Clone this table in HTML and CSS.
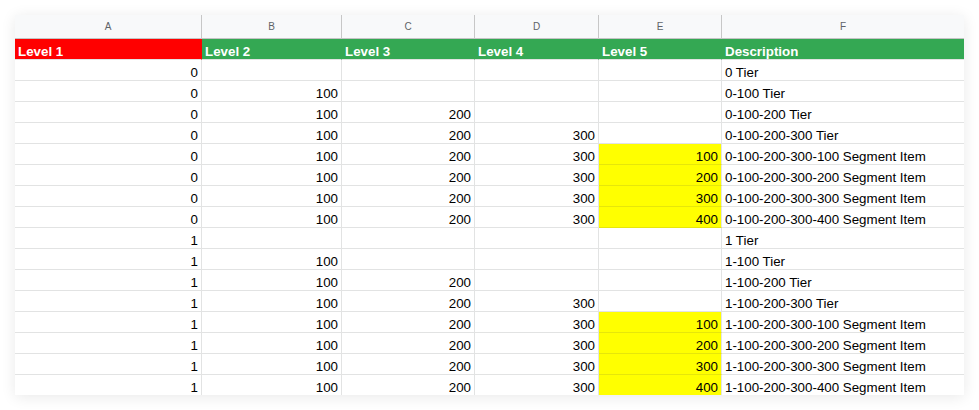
FILE: index.html
```html
<!DOCTYPE html>
<html lang="en">
<head>
<meta charset="utf-8">
<title>Levels sheet</title>
<link rel="stylesheet" href="styles.css">
</head>
<body>
<div class="sheet">
  <div class="row colhead">
    <div class="c">A</div><div class="c">B</div><div class="c">C</div><div class="c">D</div><div class="c">E</div><div class="c">F</div>
  </div>
  <div class="row head">
    <div class="c red">Level 1</div><div class="c green">Level 2</div><div class="c green">Level 3</div><div class="c green">Level 4</div><div class="c green">Level 5</div><div class="c green">Description</div>
  </div>
  <div class="row"><div class="c n">0</div><div class="c n"></div><div class="c n"></div><div class="c n"></div><div class="c n"></div><div class="c t">0 Tier</div></div>
  <div class="row"><div class="c n">0</div><div class="c n">100</div><div class="c n"></div><div class="c n"></div><div class="c n"></div><div class="c t">0-100 Tier</div></div>
  <div class="row"><div class="c n">0</div><div class="c n">100</div><div class="c n">200</div><div class="c n"></div><div class="c n"></div><div class="c t">0-100-200 Tier</div></div>
  <div class="row"><div class="c n">0</div><div class="c n">100</div><div class="c n">200</div><div class="c n">300</div><div class="c n"></div><div class="c t">0-100-200-300 Tier</div></div>
  <div class="row"><div class="c n">0</div><div class="c n">100</div><div class="c n">200</div><div class="c n">300</div><div class="c n hl">100</div><div class="c t">0-100-200-300-100 Segment Item</div></div>
  <div class="row"><div class="c n">0</div><div class="c n">100</div><div class="c n">200</div><div class="c n">300</div><div class="c n hl">200</div><div class="c t">0-100-200-300-200 Segment Item</div></div>
  <div class="row"><div class="c n">0</div><div class="c n">100</div><div class="c n">200</div><div class="c n">300</div><div class="c n hl">300</div><div class="c t">0-100-200-300-300 Segment Item</div></div>
  <div class="row"><div class="c n">0</div><div class="c n">100</div><div class="c n">200</div><div class="c n">300</div><div class="c n hl">400</div><div class="c t">0-100-200-300-400 Segment Item</div></div>
  <div class="row"><div class="c n">1</div><div class="c n"></div><div class="c n"></div><div class="c n"></div><div class="c n"></div><div class="c t">1 Tier</div></div>
  <div class="row"><div class="c n">1</div><div class="c n">100</div><div class="c n"></div><div class="c n"></div><div class="c n"></div><div class="c t">1-100 Tier</div></div>
  <div class="row"><div class="c n">1</div><div class="c n">100</div><div class="c n">200</div><div class="c n"></div><div class="c n"></div><div class="c t">1-100-200 Tier</div></div>
  <div class="row"><div class="c n">1</div><div class="c n">100</div><div class="c n">200</div><div class="c n">300</div><div class="c n"></div><div class="c t">1-100-200-300 Tier</div></div>
  <div class="row"><div class="c n">1</div><div class="c n">100</div><div class="c n">200</div><div class="c n">300</div><div class="c n hl">100</div><div class="c t">1-100-200-300-100 Segment Item</div></div>
  <div class="row"><div class="c n">1</div><div class="c n">100</div><div class="c n">200</div><div class="c n">300</div><div class="c n hl">200</div><div class="c t">1-100-200-300-200 Segment Item</div></div>
  <div class="row"><div class="c n">1</div><div class="c n">100</div><div class="c n">200</div><div class="c n">300</div><div class="c n hl">300</div><div class="c t">1-100-200-300-300 Segment Item</div></div>
  <div class="row last"><div class="c n">1</div><div class="c n">100</div><div class="c n">200</div><div class="c n">300</div><div class="c n hl">400</div><div class="c t">1-100-200-300-400 Segment Item</div></div>
</div>
</body>
</html>
```

FILE: styles.css
```css
* { box-sizing: border-box; }

html, body {
  margin: 0;
  padding: 0;
  background: #ffffff;
}

body {
  padding: 15px;
  font-family: "Liberation Sans", Arial, sans-serif;
  color: #000000;
}

.sheet {
  width: 949px;
  height: 380px;
  background: #ffffff;
  box-shadow: 0 2px 14px rgba(0, 0, 0, 0.09);
  overflow: hidden;
}

.row {
  display: grid;
  grid-template-columns: 187px 140px 133px 124px 123px 242px;
  height: 21px;
}

.c {
  height: 21px;
  padding: 0 3px;
  border-right: 1px solid #e2e3e3;
  border-bottom: 1px solid #e2e3e3;
  font-size: 13.33px;
  line-height: 14px;
  display: flex;
  align-items: flex-end;
  white-space: nowrap;
  overflow: hidden;
}

.c:last-child { border-right: none; }

.n { justify-content: flex-end; }
.t { justify-content: flex-start; }

.colhead { height: 24px; }

.colhead .c {
  height: 24px;
  background: #f8f9fa;
  border-right-color: #c7c7c7;
  border-bottom-color: #c4c4c4;
  justify-content: center;
  align-items: center;
  font-size: 10px;
  line-height: 12px;
  color: #5f6368;
  padding-top: 1px;
}

.head .c {
  font-weight: bold;
  color: #ffffff;
  border-bottom-color: #e2e3e3;
}

.red {
  background: #ff0000;
  border-right-color: #ff0000 !important;
}

.green {
  background: #34a853;
  border-right-color: #34a853 !important;
}

.hl {
  background: #ffff00;
  border-bottom-color: #e6e60a;
}

.last .c { border-bottom-color: transparent; }
```
